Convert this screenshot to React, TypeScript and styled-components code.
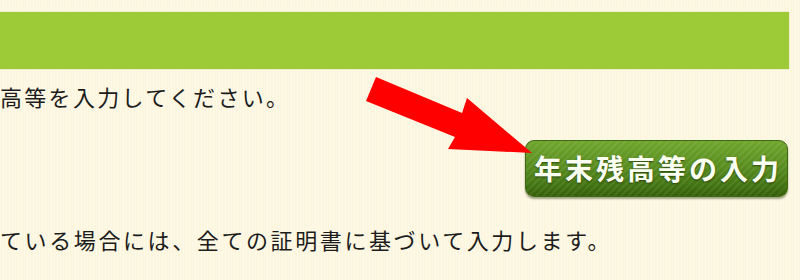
import React from "react";
import styled, { createGlobalStyle } from "styled-components";

const Global = createGlobalStyle`
  html, body { margin: 0; padding: 0; }
  body {
    background-color: #fdf6de;
    background-image: repeating-linear-gradient(90deg, rgba(255,255,255,0.35) 0 1px, transparent 1px 3px);
    font-family: "Noto Sans CJK JP", "Noto Sans", sans-serif;
    width: 800px;
    height: 280px;
    overflow: hidden;
  }
`;

const Page = styled.div`
  position: relative;
  width: 800px;
  height: 280px;
  padding-top: 12px;
  box-sizing: border-box;
  display: flex;
  flex-direction: column;
`;

const Bar = styled.div`
  height: 57px;
  width: 789px;
  background: #9dcb37;
  box-shadow: 0 0 1px rgba(120, 160, 40, 0.6);
`;

const Line = styled.p<{ $top: number; $spacing: number }>`
  margin: ${(p) => p.$top}px 0 0 0;
  font-size: 22px;
  line-height: 30px;
  letter-spacing: ${(p) => p.$spacing}px;
  color: #1c1c1c;
  white-space: nowrap;
`;

const ButtonRow = styled.div`
  display: flex;
  justify-content: flex-end;
  padding-right: 12px;
  margin-top: 29px;
`;

const GreenButton = styled.button`
  width: 263px;
  height: 57px;
  border: 1px solid #3f6812;
  border-radius: 9px;
  background:
    repeating-linear-gradient(135deg, rgba(255,255,255,0.07) 0 2px, transparent 2px 5px),
    linear-gradient(180deg, #70a62e 0%, #5a8e20 45%, #437412 80%, #365f0a 100%);
  box-shadow: 0 2px 2px rgba(40, 60, 10, 0.45);
  color: #fbfff2;
  font-family: "Noto Sans CJK JP", "Noto Sans", sans-serif;
  font-size: 28px;
  font-weight: 700;
  letter-spacing: 3px;
  text-shadow: 0 1px 2px rgba(20, 40, 0, 0.7);
  padding: 0 0 2px 3px;
  display: flex;
  align-items: center;
  justify-content: center;
  cursor: pointer;
`;

const ArrowSvg = styled.svg`
  position: absolute;
  left: 360px;
  top: 70px;
  width: 180px;
  height: 90px;
  overflow: visible;
`;

export default function App() {
  return (
    <>
      <Global />
      <Page>
        <Bar />
        <Line $top={12} $spacing={2.3}>高等を入力してください。</Line>
        <ButtonRow>
          <GreenButton>年末残高等の入力</GreenButton>
        </ButtonRow>
        <Line $top={27} $spacing={2.6}>ている場合には、全ての証明書に基づいて入力します。</Line>
        <ArrowSvg viewBox="360 70 180 90">
          <polygon
            points="376,77 462,113 467,98 532,153 448,149 455,137 366,101"
            fill="#ff0000"
          />
        </ArrowSvg>
      </Page>
    </>
  );
}
